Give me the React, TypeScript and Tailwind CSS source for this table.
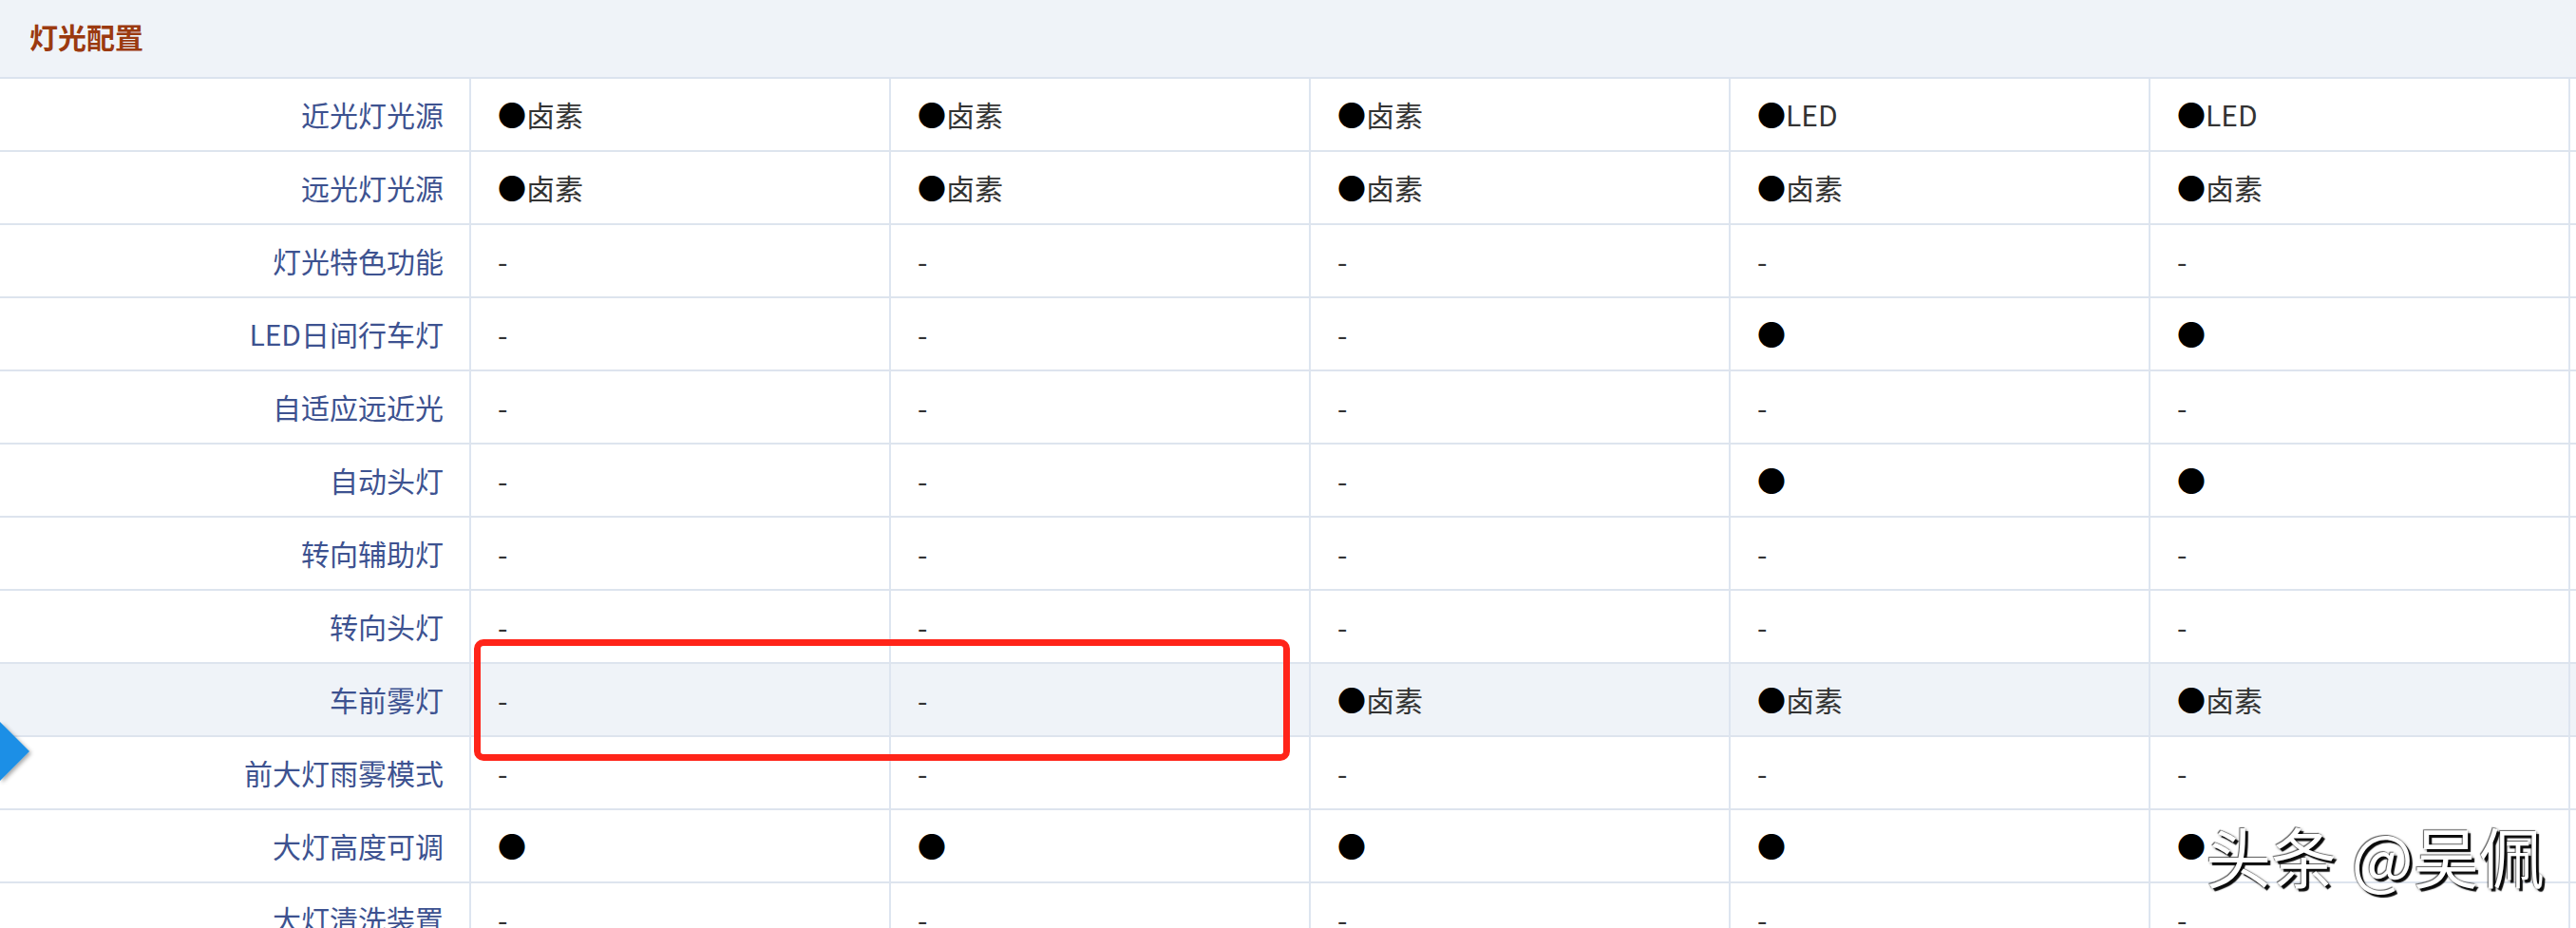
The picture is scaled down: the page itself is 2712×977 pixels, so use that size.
import clsx from "clsx";

type Row = { label: string; cells: string[]; hl?: boolean };

const D = "-";
const rows: Row[] = [
  { label: "近光灯光源", cells: ["●卤素", "●卤素", "●卤素", "●LED", "●LED"] },
  { label: "远光灯光源", cells: ["●卤素", "●卤素", "●卤素", "●卤素", "●卤素"] },
  { label: "灯光特色功能", cells: [D, D, D, D, D] },
  { label: "LED日间行车灯", cells: [D, D, D, "●", "●"] },
  { label: "自适应远近光", cells: [D, D, D, D, D] },
  { label: "自动头灯", cells: [D, D, D, "●", "●"] },
  { label: "转向辅助灯", cells: [D, D, D, D, D] },
  { label: "转向头灯", cells: [D, D, D, D, D] },
  { label: "车前雾灯", cells: [D, D, "●卤素", "●卤素", "●卤素"], hl: true },
  { label: "前大灯雨雾模式", cells: [D, D, D, D, D] },
  { label: "大灯高度可调", cells: ["●", "●", "●", "●", "●"] },
  { label: "大灯清洗装置", cells: [D, D, D, D, D] },
];

function Cell({ value }: { value: string }) {
  if (!value.startsWith("●")) return <>{value}</>;
  return (
    <>
      <span className="text-black">●</span>
      {value.slice(1)}
    </>
  );
}

export default function App() {
  return (
    <div className="relative h-[977px] w-[2712px] overflow-hidden bg-white font-['Noto_Sans_CJK_SC',sans-serif]">
      <div className="flex h-[83px] items-center border-b-2 border-[#dbe3ee] bg-[#eff3f8] pl-[31px] pb-[5px]">
        <h2 className="text-[30px] font-bold text-[#9b3a10]">灯光配置</h2>
      </div>

      {rows.map((r) => (
        <div
          key={r.label}
          className={clsx(
            "grid h-[77px] grid-cols-[496px_repeat(5,442px)] border-b-2 border-[#dde4ee]",
            r.hl && "bg-[#eff3f8]"
          )}
        >
          <div className="flex items-center justify-end border-r-2 border-[#dde5f0] pr-[27px] text-[30px] text-[#3d5290]">
            {r.label}
          </div>
          {r.cells.map((c, i) => (
            <div
              key={i}
              className="flex items-center border-r-2 border-[#dde5f0] pl-[28px] text-[30px] text-[#333]"
            >
              <Cell value={c} />
            </div>
          ))}
        </div>
      ))}

      {/* red highlight box */}
      <div className="absolute left-[499px] top-[673px] h-[128px] w-[859px] rounded-[10px] border-[7px] border-[#ff2419]" />

      {/* blue side arrow */}
      <svg className="absolute left-0 top-[754px]" width="48" height="76" viewBox="0 0 48 76">
        <defs>
          <filter id="sh" x="-50%" y="-50%" width="200%" height="200%">
            <feDropShadow dx="2" dy="2" stdDeviation="2" floodOpacity="0.35" />
          </filter>
        </defs>
        <polygon points="0,6 31,37 0,68" fill="#1b8fe6" filter="url(#sh)" />
      </svg>

      {/* watermark */}
      <div className="absolute left-[2322px] top-[866px] text-[69px] leading-none text-white [text-shadow:3px_3px_1px_rgba(0,0,0,0.95),-1px_-1px_1px_rgba(0,0,0,0.6),1px_1px_3px_rgba(0,0,0,0.6)]">
        头条 @吴佩
      </div>
    </div>
  );
}
